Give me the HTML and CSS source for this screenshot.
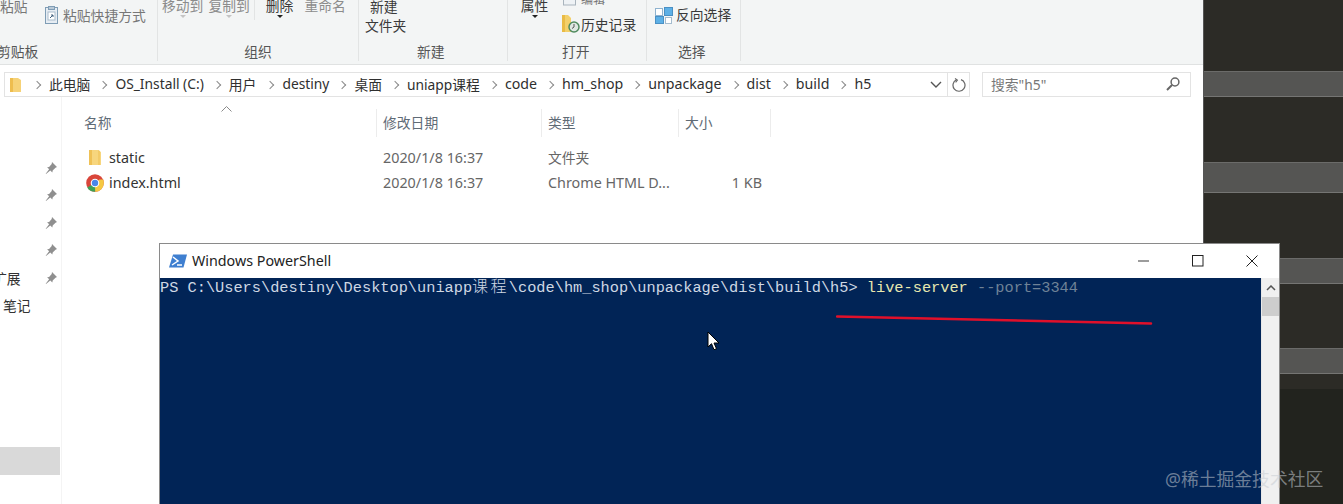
FILE: index.html
```html
<!DOCTYPE html>
<html lang="zh">
<head>
<meta charset="utf-8">
<title>Windows PowerShell</title>
<link rel="stylesheet" href="styles.css">
</head>
<body>
<div class="desktop">
  <main class="explorer">
    <section class="ribbon">
      <div class="group g-clip">
        <div class="g-body clip-body">
          <span class="paste">粘贴</span>
          <span class="shortcut">
            <svg width="13" height="18" viewBox="0 0 13 18"><rect x=".5" y="1.5" width="12" height="16" fill="#e6edf3" stroke="#7f9db5"/><rect x="3.5" y=".5" width="6" height="3" fill="#b9c9d6" stroke="#7f9db5"/><rect x="3" y="6" width="7" height="8" fill="#fff" stroke="#a9bccb"/><path d="M5 12l3-3M6 9h2v2" stroke="#40617e" fill="none"/></svg>
            粘贴快捷方式
          </span>
        </div>
        <div class="g-label label-clip">剪贴板</div>
      </div>
      <div class="group g-org">
        <div class="g-body org-body">
          <span class="dim stack">移动到<i class="caret-soft"></i></span>
          <span class="dim stack">复制到<i class="caret-soft"></i></span>
          <span class="mini-sep"></span>
          <span class="stack">删除<i class="caret-dark"></i></span>
          <span class="dim">重命名</span>
        </div>
        <div class="g-label">组织</div>
      </div>
      <div class="group g-new">
        <div class="g-body new-body"><span>新建</span><span>文件夹</span></div>
        <div class="g-label">新建</div>
      </div>
      <div class="group g-open">
        <div class="g-body open-body">
          <span class="stack prop">属性<i class="caret-dark"></i></span>
          <div class="open-col">
            <span class="open-edit">
              <svg width="13" height="6" viewBox="0 0 13 6"><rect x=".5" y="-3" width="12" height="8" fill="#eef2f5" stroke="#a9b4bd"/></svg>
              <span class="edit-text">编辑</span>
            </span>
            <span class="open-history">
              <svg width="18" height="18" viewBox="0 0 18 18"><path d="M0 0h6l3 3v14H0z" fill="#f3d06a"/><path d="M0 0h3v17H0z" fill="#e9bb45"/><circle cx="12" cy="12" r="5" fill="#dfe8e2" stroke="#4f8a5e" stroke-width="1.500"/><path d="M12 9v3l-2 1.500" stroke="#555" fill="none"/></svg>
              历史记录
            </span>
          </div>
        </div>
        <div class="g-label">打开</div>
      </div>
      <div class="group g-sel">
        <div class="g-body sel-body">
          <svg width="18" height="17" viewBox="0 0 18 17"><rect x=".5" y="1.5" width="7" height="7" fill="#fff" stroke="#8fb3cf"/><rect x="9.5" y=".5" width="8" height="8" fill="#5db0e6" stroke="#4a90c4"/><rect x=".5" y="9.5" width="8" height="7" fill="#5db0e6" stroke="#4a90c4"/><rect x="10.5" y="10.5" width="6" height="6" fill="#fff" stroke="#a4bccf"/></svg>
          <span>反向选择</span>
        </div>
        <div class="g-label">选择</div>
      </div>
    </section>

    <section class="address-row">
      <div class="address">
        <svg class="folder-small" width="11" height="16" viewBox="0 0 11 16"><path d="M0 1h8l3 2v12H0z" fill="#f6d277"/><path d="M0 1h3v14H0z" fill="#eebd4e"/></svg>
        <ol class="crumbs">
          <li>此电脑</li><li>OS_Install (C:)</li><li>用户</li><li>destiny</li><li>桌面</li><li>uniapp课程</li><li class="lat">code</li><li class="lat">hm_shop</li><li class="lat">unpackage</li><li class="lat">dist</li><li class="lat">build</li><li class="lat">h5</li>
        </ol>
        <svg class="addr-chevron" width="12" height="7" viewBox="0 0 12 7"><path d="M1 1l5 5 5-5" fill="none" stroke="#555" stroke-width="1.4"/></svg>
        <span class="refresh">
          <svg width="14" height="14" viewBox="0 0 14 14"><path d="M4.5 1.8A6 6 0 1 0 9 1.6" fill="none" stroke="#666" stroke-width="1.2"/><path d="M3 .5l2.4 1.6L3.6 4.3" fill="none" stroke="#666" stroke-width="1.1"/></svg>
        </span>
      </div>
      <div class="search">
        <span>搜索"h5"</span>
        <svg width="14" height="14" viewBox="0 0 14 14"><circle cx="9" cy="5" r="3.9" fill="none" stroke="#666" stroke-width="1.5"/><path d="M6 8l-5 5" stroke="#666" stroke-width="2"/></svg>
      </div>
    </section>

    <section class="content">
      <aside class="nav">
        <ul class="pins">
          <li><svg class="pin" viewBox="0 0 12 12"><path d="M7 0l5 5-1.500.7-2.800 2.800-.4 2-2-2L1 12l-.3-.3 3.400-4.400-2-2 2-.4L6.700 2z" fill="#8f8f8f"/></svg></li>
          <li><svg class="pin" viewBox="0 0 12 12"><path d="M7 0l5 5-1.500.7-2.800 2.800-.4 2-2-2L1 12l-.3-.3 3.400-4.400-2-2 2-.4L6.700 2z" fill="#8f8f8f"/></svg></li>
          <li><svg class="pin" viewBox="0 0 12 12"><path d="M7 0l5 5-1.500.7-2.800 2.800-.4 2-2-2L1 12l-.3-.3 3.400-4.400-2-2 2-.4L6.700 2z" fill="#8f8f8f"/></svg></li>
          <li><svg class="pin" viewBox="0 0 12 12"><path d="M7 0l5 5-1.500.7-2.800 2.800-.4 2-2-2L1 12l-.3-.3 3.400-4.400-2-2 2-.4L6.700 2z" fill="#8f8f8f"/></svg></li>
          <li><span class="nav-text expand">扩展</span><svg class="pin" viewBox="0 0 12 12"><path d="M7 0l5 5-1.500.7-2.800 2.800-.4 2-2-2L1 12l-.3-.3 3.400-4.400-2-2 2-.4L6.700 2z" fill="#8f8f8f"/></svg></li>
          <li class="note"><span class="nav-text">笔记</span></li>
        </ul>
        <div class="nav-selected"></div>
      </aside>
      <div class="files">
        <svg class="sort" width="11" height="6" viewBox="0 0 11 6"><path d="M.5 5.500l5-5 5 5" fill="none" stroke="#8a8a8a"/></svg>
        <div class="row head">
          <span class="col c-name">名称</span>
          <span class="col c-date">修改日期</span>
          <span class="col c-type">类型</span>
          <span class="col c-size">大小</span>
        </div>
        <div class="row item">
          <span class="col c-name name">
            <svg width="18" height="17" viewBox="-3 0 18 17"><path d="M0 1h9l3 2v13H0z" fill="#f7d67e"/><path d="M0 1h3v15H0z" fill="#efc156"/><path d="M9 1l2 1v14H9z" fill="#f3cb68"/></svg>
            static
          </span>
          <span class="col c-date">2020/1/8 16:37</span>
          <span class="col c-type c-cjk">文件夹</span>
          <span class="col c-size"></span>
        </div>
        <div class="row item">
          <span class="col c-name name">
            <svg width="18" height="18" viewBox="0 0 18 18"><circle cx="9" cy="9" r="8.800" fill="#d9453a"/><path d="M9 9L1.200 13.500A9 9 0 0 0 9 17.800l4-8z" fill="#3fa155"/><path d="M9 9l4.500-3.500h3.700a9 9 0 0 1-8 12.300z" fill="#f5c842"/><circle cx="9" cy="9" r="4.300" fill="#fff"/><circle cx="9" cy="9" r="3.200" fill="#4a87e8"/></svg>
            index.html
          </span>
          <span class="col c-date">2020/1/8 16:37</span>
          <span class="col c-type">Chrome HTML D...</span>
          <span class="col c-size size">1 KB</span>
        </div>
      </div>
    </section>
  </main>

  <aside class="panel">
    <div class="band b1"></div>
    <div class="band b2"></div>
    <div class="band b3"></div>
    <div class="band b4"></div>
    <div class="panel-foot"></div>
  </aside>

  <section class="ps">
    <header class="ps-title">
      <svg width="18" height="16" viewBox="0 0 18 15"><path d="M4 1h14l-3.500 13H0z" fill="#3f7fd0"/><path d="M4 3.500l5 4-6 4" fill="none" stroke="#fff" stroke-width="1.500"/><path d="M8 11.500h5" stroke="#fff" stroke-width="1.500"/></svg>
      <span class="ps-name">Windows PowerShell</span>
      <span class="ps-controls">
        <svg width="12" height="12" viewBox="0 0 12 12"><path d="M0 6h11" stroke="#666" stroke-width="1.300"/></svg>
        <svg width="12" height="12" viewBox="0 0 12 12"><rect x=".5" y=".5" width="10.500" height="10.500" fill="none" stroke="#222"/></svg>
        <svg width="12" height="12" viewBox="0 0 12 12"><path d="M.5.500l11 11M11.500.500l-11 11" stroke="#222"/></svg>
      </span>
    </header>
    <div class="ps-body">
      <div class="term">
        <div class="line">PS C:\Users\destiny\Desktop\uniapp<span class="cjk">课程</span>\code\hm_shop\unpackage\dist\build\h5&gt; <span class="cmd">live-server</span> <span class="arg">--port=3344</span></div>
      </div>
      <div class="scroll">
        <svg width="10" height="6" viewBox="0 0 10 6"><path d="M1 5l4-4 4 4" fill="none" stroke="#555" stroke-width="1.500"/></svg>
        <div class="thumb"></div>
      </div>
    </div>
  </section>

  <svg class="scribble" width="320" height="12" viewBox="0 0 320 12"><path d="M1 1.500L315 8.500" stroke="#e0102a" stroke-width="2.500" stroke-linecap="round"/></svg>
  <svg class="cursor" width="14" height="20" viewBox="0 0 14 20"><path d="M1 1v15l3.500-3.300 2.500 6 2.500-1-2.500-5.700h5z" fill="#fff" stroke="#000"/></svg>
  <div class="watermark">@稀土掘金技术社区</div>
</div>
</body>
</html>
```
FILE: styles.css
```css
* { box-sizing: border-box; }
html, body { margin: 0; padding: 0; }
body { background: #fff; font-family: "Noto Sans", "Noto Sans CJK SC", sans-serif; font-size: 13.8px; color: #3a3a3a; }
ul, ol { list-style: none; margin: 0; padding: 0; }
svg { display: block; flex: none; }

.desktop { position: relative; width: 1343px; height: 504px; overflow: hidden; display: flex; }
.explorer { width: 1203px; height: 504px; background: #fff; flex: none; display: flex; flex-direction: column; }

/* ribbon */
.ribbon { height: 65px; flex: none; background: #f3f5f5; border-bottom: 1px solid #e0e2e2; display: flex; overflow: hidden; }
.group { height: 61px; border-right: 1px solid #e2e4e4; display: flex; flex-direction: column; flex: none; }
.g-body { height: 43px; display: flex; flex: none; }
.g-label { height: 18px; line-height: 18px; text-align: center; color: #555; white-space: nowrap; }
.dim { color: #8c8c8c; }
.g-clip { width: 158px; }
.paste { margin: -3px 0 0 0; color: #777; line-height: 20px; height: 20px; width: 45px; }
.shortcut { display: flex; align-items: center; gap: 5px; height: 18px; margin-top: 6px; color: #777; white-space: nowrap; }
.label-clip { text-align: left; margin-left: -3px; }
.g-org { width: 201px; }
.org-body { padding-left: 4px; gap: 5px; }
.stack { display: flex; flex-direction: column; align-items: center; line-height: 20px; margin-top: -4px; white-space: nowrap; }
.org-body > .dim:last-child { margin-top: -4px; line-height: 20px; margin-left: 6px; white-space: nowrap; }
.mini-sep { width: 1px; height: 20px; background: #e2e4e4; margin: 0 6px 0 -1px; }
.caret-soft { width: 0; height: 0; border: 3px solid transparent; border-top-color: #c4c4c4; border-bottom: 0; margin-top: -1px; }
.caret-dark { width: 0; height: 0; border: 3.5px solid transparent; border-top-color: #222; border-bottom: 0; margin-top: -1px; }
.g-new { width: 149px; }
.new-body { flex-direction: column; align-items: flex-start; padding-left: 6px; line-height: 19px; margin-top: -3px; height: 46px; }
.new-body span:first-child { margin-left: 5px; }
.g-new .g-label { text-align: left; padding-left: 58px; }
.g-open { width: 139px; }
.open-body { padding-left: 5px; }
.prop { width: 43px; }
.open-col { display: flex; flex-direction: column; margin-left: 7px; }
.open-edit { display: flex; gap: 5px; height: 6px; overflow: hidden; }
.edit-text { font-size: 12px; line-height: 10px; margin-top: -5px; color: #777; }
.open-history { display: flex; align-items: center; gap: 1px; margin-top: 9px; height: 18px; white-space: nowrap; margin-left: -1px; }
.g-open .g-label { text-align: left; padding-left: 54px; }
.g-sel { width: 94px; }
.sel-body { padding: 7px 0 0 8px; gap: 3px; line-height: 15px; white-space: nowrap; }
.g-sel .g-label { text-align: left; padding-left: 31px; }

/* address */
.address-row { height: 25px; margin: 7px 12px 0 4px; display: flex; gap: 12px; flex: none; }
.address { width: 966px; border: 1px solid #e3e3e3; display: flex; align-items: center; padding-left: 5px; }
.folder-small { margin-right: 16px; }
.crumbs { display: flex; flex: 1; color: #2f2f2f; white-space: nowrap; margin-top: -2px; }
.crumbs li { display: flex; align-items: center; margin-left: 12px; position: relative; }
.crumbs li + li { margin-left: 25px; }
.crumbs li:nth-child(4) { margin-left: 26px; }
.crumbs .lat { font-size: 14.2px; }
.crumbs li::before { content: ""; position: absolute; left: -15px; top: 8px; width: 5px; height: 5px; border-top: 1px solid #8a8a8a; border-right: 1px solid #8a8a8a; transform: rotate(45deg); }
.addr-chevron { margin-right: 5px; }
.refresh { width: 22px; height: 23px; border-left: 1px solid #e3e3e3; display: flex; align-items: center; justify-content: center; }
.search { flex: 1; border: 1px solid #e3e3e3; display: flex; align-items: center; justify-content: space-between; padding: 0 10px 2px 8px; color: #777; }

/* content */
.content { flex: 1; display: flex; min-height: 0; }
.nav { width: 62px; flex: none; border-right: 1px solid #f4f4f4; position: relative; overflow: hidden; }
.pins { padding-top: 57px; }
.pins li { height: 27.5px; position: relative; display: flex; align-items: center; justify-content: flex-end; padding-right: 4px; }
.pin { width: 12px; height: 12px; }
.nav-text { color: #333; white-space: nowrap; }
.expand { position: absolute; left: -7px; }
.note { justify-content: flex-start; }
.note .nav-text { position: absolute; left: 3px; }
.nav-selected { height: 28px; width: 60px; background: #d9d9d9; margin-top: 128px; }
.files { flex: 1; position: relative; padding-top: 12px; }
.sort { position: absolute; left: 159px; top: 9px; }
.row { display: flex; align-items: center; }
.head { height: 28px; color: #5f6b76; margin-bottom: 8px; }
.item { height: 25px; color: #666; font-size: 14.35px; }
.col { display: block; flex: none; padding-left: 6px; height: 28px; line-height: 28px; white-space: nowrap; }
.item .col { height: 25px; line-height: 25px; }
.item .c-cjk { font-size: 13.8px; }
.head .col { border-right: 1px solid #ececec; }
.c-name { width: 315px; padding-left: 22px; }
.c-date { width: 165px; }
.c-type { width: 137px; }
.c-size { width: 92px; }
.name { display: flex !important; align-items: center; gap: 5px; color: #333; padding-left: 24px; }
.size { text-align: right; padding-right: 9px; }

/* dark panel */
.panel { flex: 1; background: #2c2b26; border-left: 1px solid #555; display: flex; flex-direction: column; }
.band { background: #555553; border-top: 1px solid #6b6b69; border-bottom: 1px solid #757573; flex: none; }
.b1 { height: 26px; margin-top: 71px; }
.b2 { height: 31px; margin-top: 65px; }
.b3 { height: 26px; margin-top: 65px; }
.b4 { height: 26px; margin-top: 64px; }
.panel-foot { flex: 1; margin-top: 15px; background: #22231e; }

/* powershell */
.ps { position: absolute; left: 159px; top: 243px; width: 1121px; height: 261px; background: #fff; border: 1px solid #8a8a8a; border-bottom: 0; display: flex; flex-direction: column; }
.ps-title { height: 34px; flex: none; display: flex; align-items: center; padding: 0 0 1px 9px; gap: 5px; color: #222; font-size: 14.3px; }
.ps-controls { margin-left: auto; display: flex; gap: 42px; padding-right: 21px; }
.ps-body { flex: 1; display: flex; min-height: 0; }
.term { width: 1101px; background: #012456; color: #cfd8e4; font-family: "Liberation Mono", monospace; font-size: 15.3px; line-height: 20px; white-space: nowrap; overflow: hidden; padding-top: 1px; }
.cjk { font-family: "Noto Sans CJK SC", sans-serif; font-size: 16px; letter-spacing: 2.35px; font-weight: 300; line-height: 1; }
.cmd { color: #e8e8b0; }
.arg { color: #6f8296; }
.line { height: 20px; margin-top: -2px; }
.scroll { flex: 1; background: #f0f0f0; display: flex; flex-direction: column; align-items: center; padding-top: 7px; border-left: 1px solid #e8e8e8; }
.thumb { width: 100%; height: 19px; background: #cdcdcd; margin-top: 6px; }

.scribble { position: absolute; left: 836px; top: 315px; }
.cursor { position: absolute; left: 707px; top: 331px; }
.watermark { position: absolute; left: 1165px; top: 466px; font-size: 17.8px; line-height: 26px; color: rgba(200, 205, 210, .55); white-space: nowrap; }
```
